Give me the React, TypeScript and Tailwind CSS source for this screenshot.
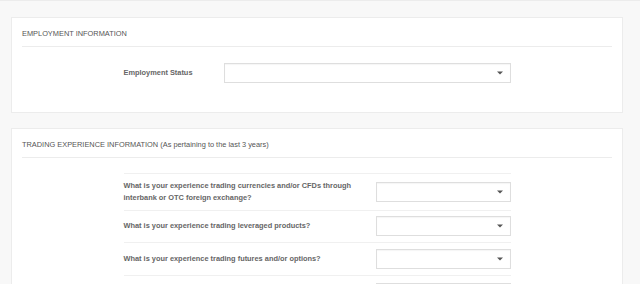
const questions = [
  'What is your experience trading currencies and/or CFDs through interbank or OTC foreign exchange?',
  'What is your experience trading leveraged products?',
  'What is your experience trading futures and/or options?',
  'Do you have knowledge and/or experience with the trading of these products, or any related professional qualifications in finance?',
];

function Select() {
  return (
    <div className="relative h-[20px] w-full border border-[#dedede] bg-white shadow-[inset_0_1px_1px_rgba(0,0,0,0.04)]">
      <span className="absolute right-[7px] top-1/2 -translate-y-1/2 h-0 w-0 border-l-[3px] border-r-[3px] border-t-[3px] border-l-transparent border-r-transparent border-t-[#555]" />
    </div>
  );
}

function Card({ title, children }: { title: string; children: React.ReactNode }) {
  return (
    <section className="bg-white border border-[#ececec] px-[10px]">
      <h2 className="pt-[10px] pb-[6px] border-b border-[#ececec] text-[7.4px] leading-[12px] text-[#555]">
        {title}
      </h2>
      {children}
    </section>
  );
}

export default function App() {
  return (
    <div
      className="h-[284px] overflow-hidden bg-[#f8f8f8] border-t border-[#ececec] pl-[11px] pr-[17px] pt-[16px]"
      style={{ fontFamily: '"Liberation Sans", Arial, sans-serif' }}
    >
      <div className="flex flex-col gap-[15px]">
        <Card title="EMPLOYMENT INFORMATION">
          <div className="pt-[16px] pb-[29px]">
            <div className="mx-auto w-[387px] flex items-center">
              <label className="w-[100px] shrink-0 text-[7.4px] font-bold text-[#666]">Employment Status</label>
              <Select />
            </div>
          </div>
        </Card>

        <Card title="TRADING EXPERIENCE INFORMATION (As pertaining to the last 3 years)">
          <div className="pt-[15px]">
            <div className="mx-auto w-[387px]">
              {questions.map((q) => (
                <div key={q} className="flex items-center border-t border-[#f0f0f0] py-[5.75px]">
                  <p className="w-[252px] shrink-0 pr-[10px] text-[7.4px] leading-[12px] font-bold text-[#666]">{q}</p>
                  <Select />
                </div>
              ))}
            </div>
          </div>
        </Card>
      </div>
    </div>
  );
}
